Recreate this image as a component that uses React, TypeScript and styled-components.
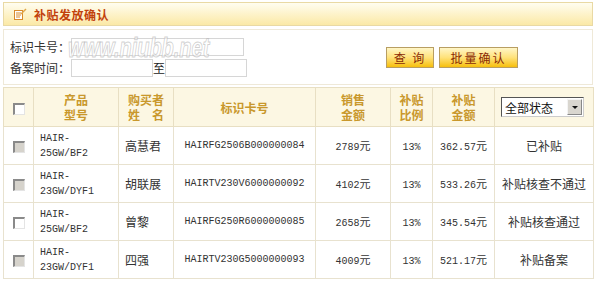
import React from "react";
import styled, { createGlobalStyle } from "styled-components";

const GlobalStyle = createGlobalStyle`
  body {
    margin: 0;
    background: #fff;
    font-family: "Liberation Sans", "Noto Sans CJK SC", sans-serif;
    color: #333;
  }
`;

const Page = styled.div`
  position: relative;
  width: 596px;
  height: 282px;
  padding: 2px 3px 0;
  box-sizing: border-box;
  overflow: hidden;
`;

const TitleBar = styled.div`
  height: 24px;
  box-sizing: border-box;
  border: 1px solid #e9d9a4;
  background: linear-gradient(#fffdf0, #fdf1c3 60%, #fbe9a6);
  display: flex;
  align-items: center;
  gap: 7px;
  padding-left: 10px;
`;

const Title = styled.span`
  font-family: "Noto Sans CJK SC", sans-serif;
  font-size: 12px;
  font-weight: 700;
  color: #c2410c;
  letter-spacing: 0.5px;
`;

const SearchPanel = styled.div`
  margin-top: 3px;
  height: 56px;
  box-sizing: border-box;
  border: 1px solid #efe9d8;
  display: flex;
  align-items: center;
  justify-content: space-between;
  padding: 0 74px 0 6px;
`;

const FormGrid = styled.div`
  display: grid;
  grid-template-columns: 61px auto;
  row-gap: 3px;
  align-items: center;
  font-family: "Noto Sans CJK SC", sans-serif;
  font-size: 12px;
  line-height: 18px;
  color: #333;
`;

const DateRange = styled.div`
  display: flex;
  align-items: center;
  font-size: 12px;
  line-height: 18px;
  color: #222;
`;

const TextInput = styled.input<{ $w: number }>`
  width: ${(p) => p.$w}px;
  height: 18px;
  box-sizing: border-box;
  border: 1px solid #d6d6d6;
  background: #fff;
  padding: 0;
  margin: 0;
`;

const ButtonRow = styled.div`
  display: flex;
  gap: 5px;
`;

const GoldButton = styled.button<{ $w: number }>`
  width: ${(p) => p.$w}px;
  height: 21px;
  box-sizing: border-box;
  border: 1px solid #b89e62;
  background: linear-gradient(#fff6c8, #ffe27a 50%, #f7bf0c);
  font-family: "Noto Sans CJK SC", sans-serif;
  font-size: 12px;
  color: #8a2a05;
  letter-spacing: 2px;
  padding: 0;
  cursor: pointer;
`;

const Table = styled.table`
  margin-top: 2px;
  width: 590px;
  border-collapse: collapse;
  table-layout: fixed;
  border: 1px solid #e6dcc0;
`;

const HeadCell = styled.th`
  height: 38px;
  background: #fcf7e3;
  border: 1px solid #e8dfc3;
  font-family: "Noto Sans CJK SC", sans-serif;
  font-size: 12px;
  font-weight: 700;
  line-height: 15px;
  color: #c9982c;
  text-align: center;
  padding: 0;
`;

const Cell = styled.td<{ $align?: string; $mono?: boolean }>`
  height: 37px;
  border: 1px solid #e8e2cf;
  padding: ${(p) => (p.$align === "left" ? "0 0 0 6px" : "0")};
  text-align: ${(p) => p.$align || "center"};
  font-family: ${(p) =>
    p.$mono
      ? '"Liberation Mono", "Noto Sans CJK SC", monospace'
      : '"Noto Sans CJK SC", sans-serif'};
  font-size: ${(p) => (p.$mono ? "10px" : "12px")};
  line-height: 15px;
  color: #333;
`;

const Amount = styled.span`
  font-family: "Liberation Mono", monospace;
  font-size: 10px;
  & > em {
    font-style: normal;
    font-family: "Noto Sans CJK SC", sans-serif;
    font-size: 11px;
  }
`;

const Check = styled.span<{ $on?: boolean }>`
  display: inline-block;
  vertical-align: middle;
  width: 12px;
  height: 12px;
  box-sizing: border-box;
  border-top: 2px solid #8a8a8a;
  border-left: 2px solid #8a8a8a;
  border-right: 1px solid #e4e4e4;
  border-bottom: 1px solid #e4e4e4;
  background: ${(p) => (p.$on ? "#fff" : "#d6d3cc")};
`;

const Select = styled.div`
  margin-left: 6px;
  width: 83px;
  height: 20px;
  box-sizing: border-box;
  border-top: 1px solid #555;
  border-left: 1px solid #555;
  border-right: 1px solid #ccc;
  border-bottom: 1px solid #ccc;
  background: #fff;
  display: flex;
  align-items: center;
  justify-content: space-between;
  font-family: "Noto Sans CJK SC", sans-serif;
  font-size: 12px;
  font-weight: 400;
  color: #111;
  padding-left: 3px;
`;

const SelectArrow = styled.span`
  width: 15px;
  height: 16px;
  margin-right: 1px;
  background: #d9d6cf;
  border: 1px solid #f4f4f4;
  border-right-color: #888;
  border-bottom-color: #888;
  box-sizing: border-box;
  display: flex;
  align-items: center;
  justify-content: center;
  &::after {
    content: "";
    border-left: 3px solid transparent;
    border-right: 3px solid transparent;
    border-top: 3px solid #111;
  }
`;

const Watermark = styled.div`
  position: absolute;
  left: 68px;
  top: 38px;
  font-family: "Liberation Sans", sans-serif;
  font-style: italic;
  font-weight: 700;
  font-size: 27px;
  line-height: 20px;
  color: rgba(255, 255, 255, 0.55);
  -webkit-text-stroke: 1px rgba(170, 170, 170, 0.55);
  transform: scaleX(0.74);
  transform-origin: left center;
  pointer-events: none;
`;

const NoteIcon = () => (
  <svg width="13" height="12" viewBox="0 0 13 12">
    <rect x="0.5" y="2.5" width="8" height="9" fill="#fff" stroke="#d98a2b" />
    <line x1="2" y1="5" x2="7" y2="5" stroke="#d98a2b" />
    <line x1="2" y1="7" x2="7" y2="7" stroke="#d98a2b" />
    <line x1="2" y1="9" x2="6" y2="9" stroke="#d98a2b" />
    <line x1="7" y1="6" x2="12" y2="1" stroke="#e0a64a" strokeWidth="1.5" />
  </svg>
);

const rows = [
  { model: ["HAIR-", "25GW/BF2"], name: "高慧君", id: "HAIRFG2506B000000084", sale: "2789", rate: "13%", sub: "362.57", status: "已补贴", on: false },
  { model: ["HAIR-", "23GW/DYF1"], name: "胡联展", id: "HAIRTV230V6000000092", sale: "4102", rate: "13%", sub: "533.26", status: "补贴核查不通过", on: false },
  { model: ["HAIR-", "25GW/BF2"], name: "曾黎", id: "HAIRFG250R6000000085", sale: "2658", rate: "13%", sub: "345.54", status: "补贴核查通过", on: true },
  { model: ["HAIR-", "23GW/DYF1"], name: "四强", id: "HAIRTV230G5000000093", sale: "4009", rate: "13%", sub: "521.17", status: "补贴备案", on: false },
];

export default function App() {
  return (
    <>
      <GlobalStyle />
      <Page>
        <TitleBar>
          <NoteIcon />
          <Title>补贴发放确认</Title>
        </TitleBar>
        <SearchPanel>
          <FormGrid>
            <span>标识卡号：</span>
            <TextInput $w={173} />
            <span>备案时间：</span>
            <DateRange>
              <TextInput $w={82} />
              <span>至</span>
              <TextInput $w={82} />
            </DateRange>
          </FormGrid>
          <ButtonRow>
            <GoldButton $w={48}>查 询</GoldButton>
            <GoldButton $w={79}>批量确认</GoldButton>
          </ButtonRow>
        </SearchPanel>
        <Table>
          <colgroup>
            <col style={{ width: 30 }} />
            <col style={{ width: 85 }} />
            <col style={{ width: 55 }} />
            <col style={{ width: 142 }} />
            <col style={{ width: 75 }} />
            <col style={{ width: 42 }} />
            <col style={{ width: 62 }} />
            <col style={{ width: 99 }} />
          </colgroup>
          <thead>
            <tr>
              <HeadCell><Check $on /></HeadCell>
              <HeadCell>产品<br />型号</HeadCell>
              <HeadCell>购买者<br />姓　名</HeadCell>
              <HeadCell>标识卡号</HeadCell>
              <HeadCell>销售<br />金额</HeadCell>
              <HeadCell>补贴<br />比例</HeadCell>
              <HeadCell>补贴<br />金额</HeadCell>
              <HeadCell>
                <Select>
                  全部状态
                  <SelectArrow />
                </Select>
              </HeadCell>
            </tr>
          </thead>
          <tbody>
            {rows.map((r) => (
              <tr key={r.id}>
                <Cell><Check $on={r.on} /></Cell>
                <Cell $align="left" $mono>
                  {r.model[0]}
                  <br />
                  {r.model[1]}
                </Cell>
                <Cell $align="left">{r.name}</Cell>
                <Cell $mono>{r.id}</Cell>
                <Cell>
                  <Amount>{r.sale}<em>元</em></Amount>
                </Cell>
                <Cell><Amount>{r.rate}</Amount></Cell>
                <Cell>
                  <Amount>{r.sub}<em>元</em></Amount>
                </Cell>
                <Cell>{r.status}</Cell>
              </tr>
            ))}
          </tbody>
        </Table>
        <Watermark>www.niubb.net</Watermark>
      </Page>
    </>
  );
}
